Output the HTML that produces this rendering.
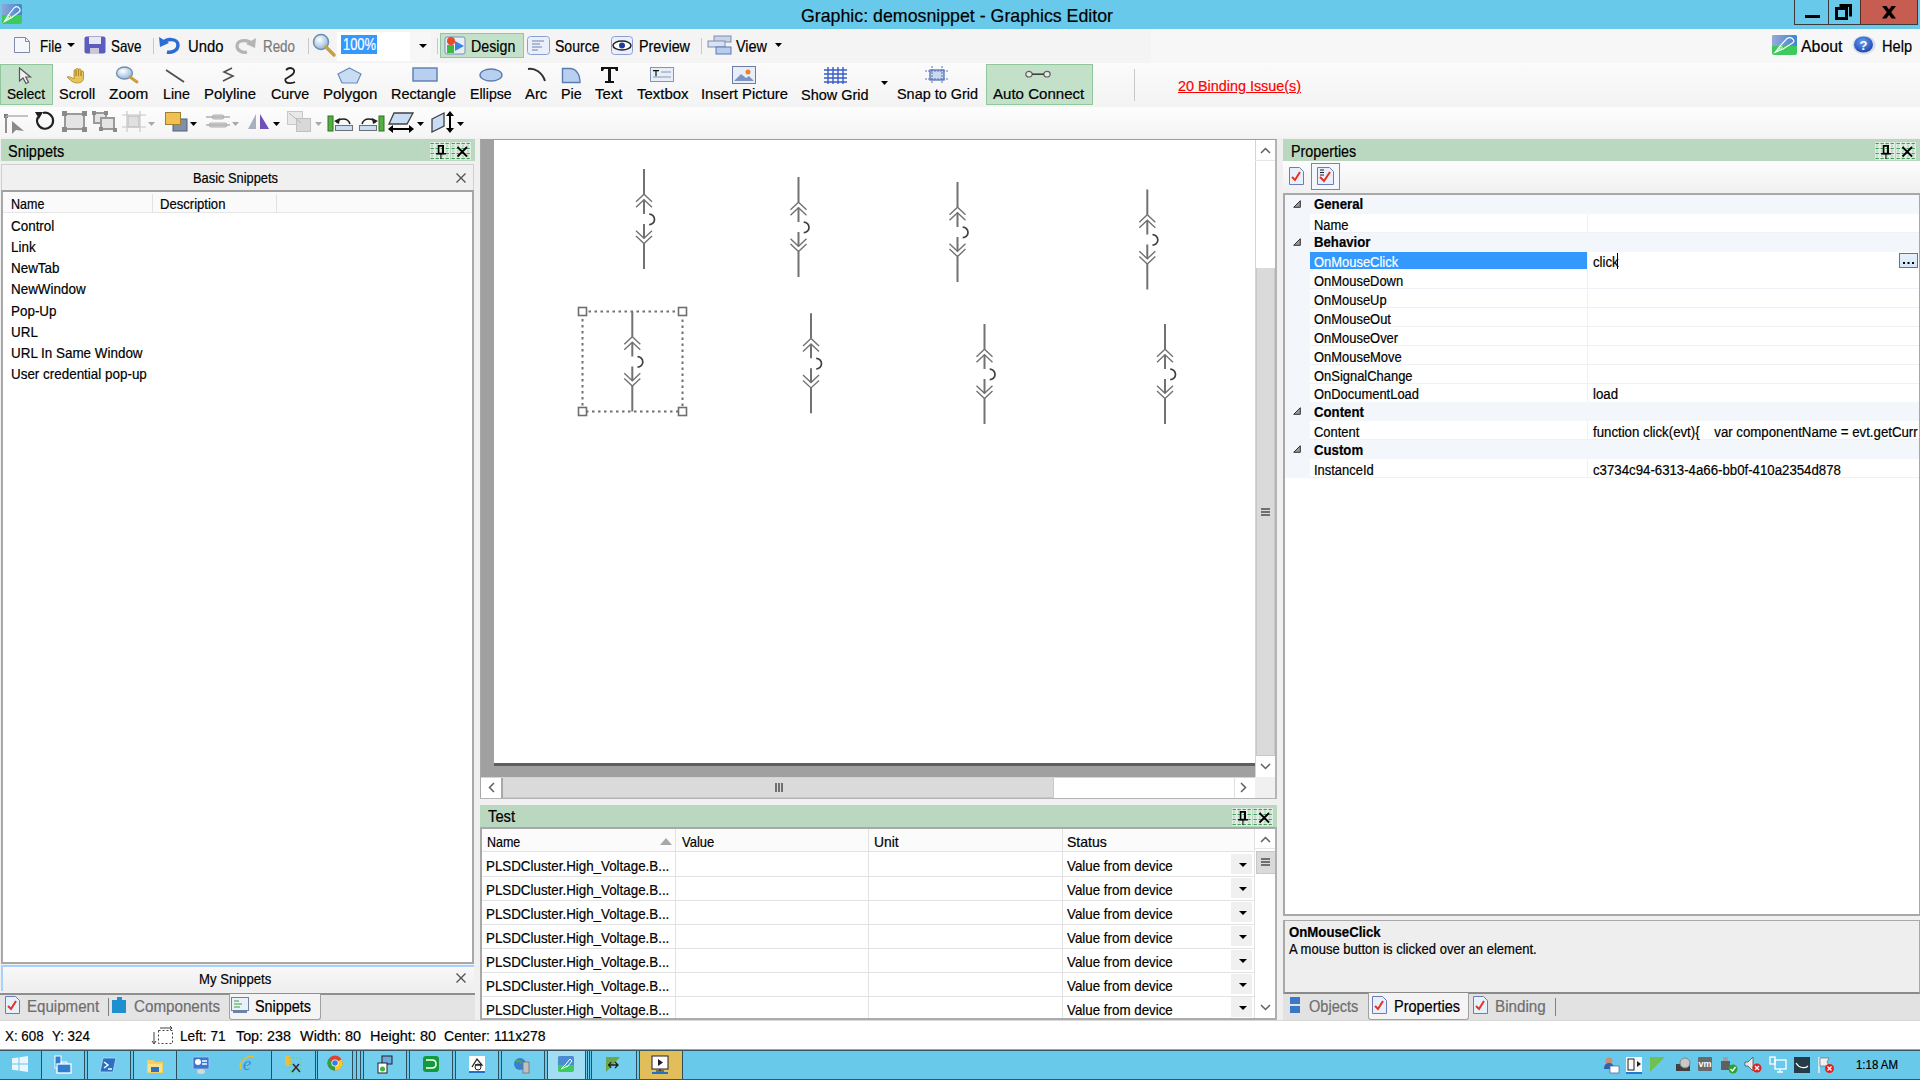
<!DOCTYPE html>
<html><head><meta charset="utf-8"><style>
html,body{margin:0;padding:0;width:1920px;height:1080px;overflow:hidden;background:#F0F0F0;font-family:"Liberation Sans", sans-serif;}
.a{position:absolute;box-sizing:border-box;}
.t{position:absolute;white-space:nowrap;font-family:"Liberation Sans", sans-serif;-webkit-text-stroke:0.2px currentColor;}
svg.a{overflow:visible}
</style></head><body>
<div class="a" style="left:0px;top:0px;width:1920px;height:29px;background:#69C9EA"></div><svg class="a" style="left:2px;top:4px;" width="20" height="20" viewBox="0 0 20 20"><defs><linearGradient id="aig" x1="0" y1="0" x2="1" y2="0"><stop offset="0" stop-color="#8FA8D8"/><stop offset="1" stop-color="#3F86D0"/></linearGradient></defs><rect x="0" y="0" width="20" height="20" rx="2" fill="#3CCB5A"/><path d="M2 0h16a2 2 0 0 1 2 2v9H0V2a2 2 0 0 1 2-2z" fill="url(#aig)"/><path d="M2.5 17.5 L6 11.5 L12.5 3.5 Q14.5 1.8 16.5 3.3 L17.8 4.8 Q18.8 6.5 17 8 L9 14 Z" fill="none" stroke="#fff" stroke-width="1.1"/><path d="M2.5 17.5L7 13" stroke="#fff" stroke-width="0.9"/><circle cx="7.2" cy="12.8" r="1.3" fill="none" stroke="#fff" stroke-width="0.8"/></svg><div class="t" style="left:801.00px;top:7.14px;font-size:18.5px;line-height:18.5px;color:#000;transform:scaleX(0.9602);transform-origin:0 0;">Graphic: demosnippet - Graphics Editor</div><div class="a" style="left:1860px;top:0px;width:58px;height:25px;background:#C75C50"></div><div class="a" style="left:1794px;top:0px;width:1px;height:25px;background:#3A3A3A"></div><div class="a" style="left:1828px;top:0px;width:1px;height:25px;background:#3A3A3A"></div><div class="a" style="left:1917px;top:0px;width:1px;height:25px;background:#5A2A25"></div><div class="a" style="left:1794px;top:24px;width:124px;height:1px;background:#3A3A3A"></div><div class="a" style="left:1805px;top:15px;width:15px;height:3px;background:#000"></div><svg class="a" style="left:1835px;top:4px;" width="17" height="16" viewBox="0 0 17 16"><path d="M4.5 1.5h11v11" fill="none" stroke="#000" stroke-width="3"/><rect x="1.5" y="4.5" width="10" height="10" fill="none" stroke="#000" stroke-width="3"/></svg><svg class="a" style="left:1881.7px;top:6px;" width="14" height="12.5" viewBox="0 0 14 12.5"><path d="M0 0H4.4L7 3.5L9.6 0H14L9.2 6.25L14 12.5H9.6L7 9L4.4 12.5H0L4.8 6.25Z" fill="#000"/></svg><div class="a" style="left:1860px;top:0px;width:1px;height:25px;background:#5A2A25"></div><div class="a" style="left:0px;top:29px;width:1920px;height:34px;background:#F4F4F4"></div><div class="a" style="left:1151px;top:29px;width:769px;height:34px;background:#F7F7F7"></div><svg class="a" style="left:13px;top:36px;" width="19" height="18" viewBox="0 0 19 18"><path d="M1.5 1.5h11l4 4v11h-15z" fill="#F4F8FC" stroke="#7F8AA8" stroke-width="1"/><path d="M12.5 1.5v4h4" fill="none" stroke="#7F8AA8"/></svg><div class="t" style="left:39.70px;top:38.03px;font-size:16.5px;line-height:16.5px;color:#000;transform:scaleX(0.8126);transform-origin:0 0;">File</div><svg class="a" style="left:67px;top:43px;" width="8" height="5" viewBox="0 0 8 5"><path d="M0 0h8L4 4z" fill="#000"/></svg><svg class="a" style="left:84px;top:36px;" width="22" height="18" viewBox="0 0 22 18"><rect x="0.5" y="0.5" width="21" height="17" rx="2" fill="#5A5DBE"/><rect x="5" y="1" width="12" height="7" fill="#E8E8F0"/><rect x="6" y="12" width="9" height="6" fill="#C8C8D8"/></svg><div class="t" style="left:111.00px;top:38.03px;font-size:16.5px;line-height:16.5px;color:#000;transform:scaleX(0.8111);transform-origin:0 0;">Save</div><div class="a" style="left:153px;top:38px;width:1px;height:16px;background:#C8C8C8"></div><svg class="a" style="left:158px;top:35px;" width="24" height="20" viewBox="0 0 24 20"><path d="M4 9 C8 3,20 3,20 10 C20 16,13 18,9 17" fill="none" stroke="#2C6BD6" stroke-width="3.5"/><path d="M1 2 L2 12 L11 8 Z" fill="#2C6BD6"/></svg><div class="t" style="left:187.50px;top:38.03px;font-size:16.5px;line-height:16.5px;color:#000;transform:scaleX(0.8998);transform-origin:0 0;">Undo</div><svg class="a" style="left:234px;top:36px;" width="23" height="18" viewBox="0 0 23 18"><path d="M19 9 C15 3,3 3,3 10 C3 15,9 17,13 16" fill="none" stroke="#B4B4B4" stroke-width="3.2"/><path d="M22 2 L21 12 L12 8 Z" fill="#B4B4B4"/></svg><div class="t" style="left:263.00px;top:38.03px;font-size:16.5px;line-height:16.5px;color:#7A7A7A;transform:scaleX(0.8111);transform-origin:0 0;">Redo</div><div class="a" style="left:308px;top:38px;width:1px;height:16px;background:#C8C8C8"></div><svg class="a" style="left:311px;top:33px;" width="25" height="24" viewBox="0 0 25 24"><defs><radialGradient id="mg" cx="0.4" cy="0.35" r="0.7"><stop offset="0" stop-color="#FFFFFF"/><stop offset="1" stop-color="#8DB3D8"/></radialGradient></defs><circle cx="10" cy="9" r="7.5" fill="url(#mg)" stroke="#6C8FB0" stroke-width="1.5"/><path d="M15 14 L23 22" stroke="#C8A040" stroke-width="3.5" stroke-linecap="round"/></svg><div class="a" style="left:337px;top:32px;width:94px;height:29px;background:#FFFFFF"></div><div class="a" style="left:410px;top:32px;width:21px;height:29px;background:#F7F7F7"></div><div class="a" style="left:341px;top:35px;width:36px;height:19px;background:#3399FF"></div><div class="t" style="left:342.50px;top:37.46px;font-size:16px;line-height:16px;color:#FFFFFF;transform:scaleX(0.8063);transform-origin:0 0;">100%</div><svg class="a" style="left:419px;top:44px;" width="8" height="5" viewBox="0 0 8 5"><path d="M0 0h8L4 4z" fill="#000"/></svg><div class="a" style="left:437px;top:38px;width:1px;height:16px;background:#C8C8C8"></div><div class="a" style="left:440px;top:33px;width:84px;height:25px;background:#C3E0C9;border:1px solid #92C79E"></div><svg class="a" style="left:444px;top:35px;" width="22" height="20" viewBox="0 0 22 20"><rect x="1" y="2" width="20" height="17" rx="2" fill="#E8EEF8" stroke="#7A8EBF"/><circle cx="7" cy="6" r="4" fill="#E84A2A"/><rect x="3" y="10" width="7" height="8" fill="#3EB83E"/><path d="M11 6 L20 11 L11 16z" fill="#3A82E0"/></svg><div class="t" style="left:471.40px;top:38.03px;font-size:16.5px;line-height:16.5px;color:#000;transform:scaleX(0.8625);transform-origin:0 0;">Design</div><svg class="a" style="left:527px;top:36px;" width="23" height="19" viewBox="0 0 23 19"><rect x="0.5" y="0.5" width="22" height="18" rx="3" fill="#E9F0FB" stroke="#8BA0D0"/><path d="M5 5h12M5 8h8M5 11h10M5 14h6" stroke="#7080A8" stroke-width="1"/></svg><div class="t" style="left:555.00px;top:38.03px;font-size:16.5px;line-height:16.5px;color:#000;transform:scaleX(0.8513);transform-origin:0 0;">Source</div><svg class="a" style="left:611px;top:36px;" width="22" height="19" viewBox="0 0 22 19"><rect x="0.5" y="0.5" width="21" height="18" rx="3" fill="#E9F0FB" stroke="#8BA0D0"/><ellipse cx="11" cy="9.5" rx="9" ry="4.5" fill="#fff" stroke="#222" stroke-width="1.5"/><circle cx="11" cy="9.5" r="3" fill="#1E3C9C"/></svg><div class="t" style="left:639.00px;top:38.03px;font-size:16.5px;line-height:16.5px;color:#000;transform:scaleX(0.8682);transform-origin:0 0;">Preview</div><div class="a" style="left:701px;top:38px;width:1px;height:16px;background:#C8C8C8"></div><svg class="a" style="left:707px;top:35px;" width="25" height="20" viewBox="0 0 25 20"><rect x="7" y="1" width="17" height="6" fill="#C8D4E8" stroke="#7C8CB0"/><rect x="1" y="6" width="17" height="6" fill="#D8E2F0" stroke="#7C8CB0"/><rect x="9" y="12" width="15" height="7" fill="#B8CCEC" stroke="#5A78B8"/></svg><div class="t" style="left:736.00px;top:38.03px;font-size:16.5px;line-height:16.5px;color:#000;transform:scaleX(0.8730);transform-origin:0 0;">View</div><svg class="a" style="left:775px;top:43px;" width="7" height="5" viewBox="0 0 7 5"><path d="M0 0h7L3.5 4z" fill="#000"/></svg><svg class="a" style="left:1772px;top:35px;" width="25" height="20" viewBox="0 0 25 20"><defs><linearGradient id="abg" x1="0" y1="0" x2="1" y2="0"><stop offset="0" stop-color="#98A8D8"/><stop offset="1" stop-color="#3F86D0"/></linearGradient></defs><rect x="0" y="0" width="25" height="20" rx="2" fill="#3CCB5A"/><path d="M2 0h21a2 2 0 0 1 2 2v9H0V2a2 2 0 0 1 2-2z" fill="url(#abg)"/><path d="M3 17.5 L7.5 11.5 L15 3.5 Q17.5 1.8 20 3.3 L21.5 4.8 Q22.8 6.5 20.5 8 L11 14 Z" fill="none" stroke="#fff" stroke-width="1.1"/><path d="M3 17.5L8.5 13" stroke="#fff" stroke-width="0.9"/><circle cx="8.7" cy="12.8" r="1.4" fill="none" stroke="#fff" stroke-width="0.8"/></svg><div class="t" style="left:1801.00px;top:37.73px;font-size:16.5px;line-height:16.5px;color:#000;transform:scaleX(0.9626);transform-origin:0 0;">About</div><svg class="a" style="left:1852px;top:35px;" width="25" height="20" viewBox="0 0 25 20"><defs><radialGradient id="hg" cx="0.45" cy="0.35" r="0.7"><stop offset="0" stop-color="#6AA0F0"/><stop offset="1" stop-color="#1840B0"/></radialGradient></defs><ellipse cx="12" cy="10" rx="11.5" ry="9.5" fill="#D8DDE8"/><ellipse cx="11.5" cy="9.5" rx="9.5" ry="8" fill="url(#hg)"/><text x="11.5" y="15" font-size="13" font-weight="bold" text-anchor="middle" fill="#fff" font-family="Liberation Sans">?</text></svg><div class="t" style="left:1881.70px;top:37.73px;font-size:16.5px;line-height:16.5px;color:#000;transform:scaleX(0.8839);transform-origin:0 0;">Help</div><div class="a" style="left:0px;top:63px;width:1920px;height:44px;background:linear-gradient(#FBFBFB,#F3F3F3)"></div><div class="a" style="left:0px;top:64px;width:53px;height:41px;background:#C3E0C9;border:1px solid #92C79E"></div><div class="a" style="left:986px;top:64px;width:107px;height:41px;background:#C3E0C9;border:1px solid #92C79E"></div><div class="t" style="left:7.00px;top:85.88px;font-size:15.5px;line-height:15.5px;color:#000;transform:scaleX(0.8822);transform-origin:0 0;">Select</div><div class="t" style="left:58.75px;top:85.88px;font-size:15.5px;line-height:15.5px;color:#000;transform:scaleX(0.9351);transform-origin:0 0;">Scroll</div><div class="t" style="left:108.75px;top:85.88px;font-size:15.5px;line-height:15.5px;color:#000;transform:scaleX(0.9907);transform-origin:0 0;">Zoom</div><div class="t" style="left:163.00px;top:85.88px;font-size:15.5px;line-height:15.5px;color:#000;transform:scaleX(0.9212);transform-origin:0 0;">Line</div><div class="t" style="left:204.00px;top:85.88px;font-size:15.5px;line-height:15.5px;color:#000;transform:scaleX(0.9580);transform-origin:0 0;">Polyline</div><div class="t" style="left:270.50px;top:85.88px;font-size:15.5px;line-height:15.5px;color:#000;transform:scaleX(0.9249);transform-origin:0 0;">Curve</div><div class="t" style="left:322.50px;top:85.88px;font-size:15.5px;line-height:15.5px;color:#000;transform:scaleX(0.9685);transform-origin:0 0;">Polygon</div><div class="t" style="left:391.00px;top:85.88px;font-size:15.5px;line-height:15.5px;color:#000;transform:scaleX(0.9313);transform-origin:0 0;">Rectangle</div><div class="t" style="left:470.00px;top:85.88px;font-size:15.5px;line-height:15.5px;color:#000;transform:scaleX(0.9132);transform-origin:0 0;">Ellipse</div><div class="t" style="left:525.00px;top:85.88px;font-size:15.5px;line-height:15.5px;color:#000;transform:scaleX(0.9591);transform-origin:0 0;">Arc</div><div class="t" style="left:561.00px;top:85.88px;font-size:15.5px;line-height:15.5px;color:#000;transform:scaleX(0.9242);transform-origin:0 0;">Pie</div><div class="t" style="left:595.00px;top:85.88px;font-size:15.5px;line-height:15.5px;color:#000;transform:scaleX(0.9604);transform-origin:0 0;">Text</div><div class="t" style="left:636.70px;top:85.88px;font-size:15.5px;line-height:15.5px;color:#000;transform:scaleX(0.9661);transform-origin:0 0;">Textbox</div><div class="t" style="left:700.70px;top:85.88px;font-size:15.5px;line-height:15.5px;color:#000;transform:scaleX(0.9528);transform-origin:0 0;">Insert Picture</div><div class="t" style="left:800.70px;top:86.68px;font-size:15.5px;line-height:15.5px;color:#000;transform:scaleX(0.9343);transform-origin:0 0;">Show Grid</div><div class="t" style="left:897.30px;top:85.88px;font-size:15.5px;line-height:15.5px;color:#000;transform:scaleX(0.9309);transform-origin:0 0;">Snap to Grid</div><div class="t" style="left:992.70px;top:85.88px;font-size:15.5px;line-height:15.5px;color:#000;transform:scaleX(0.9720);transform-origin:0 0;">Auto Connect</div><svg class="a" style="left:18px;top:67px;" width="16" height="17" viewBox="0 0 16 17"><path d="M1.5 1 L1.5 14 L5 11 L8 16.5 L10.5 15.3 L7.8 10 L12.5 10 Z" fill="#F0F0F0" stroke="#555" stroke-width="1.2"/></svg><svg class="a" style="left:66px;top:68px;" width="22" height="15" viewBox="0 0 22 15"><path d="M1 9 C4 8,6 10,8 11 L8 3 C8 1,10 1,10 3 L10 8 L10 1.5 C10 0,12.5 0,12.5 1.5 L12.5 8 L12.5 2 C12.5 0.5,15 0.5,15 2 L15 8 L15 4 C15 2.5,17.5 2.5,17.5 4 L17.5 10 C17.5 14,14 15,11 15 C7 15,4 12,1 9Z" fill="#E6C45A" stroke="#A8872A" stroke-width="0.8"/></svg><svg class="a" style="left:115px;top:66px;" width="25" height="18" viewBox="0 0 25 18"><defs><radialGradient id="mg2" cx="0.4" cy="0.35" r="0.7"><stop offset="0" stop-color="#FFFFFF"/><stop offset="1" stop-color="#8DB3D8"/></radialGradient></defs><ellipse cx="9.5" cy="7" rx="8" ry="6" fill="url(#mg2)" stroke="#6C8FB0" stroke-width="1.3"/><path d="M15 11 L22 16" stroke="#C8A040" stroke-width="3" stroke-linecap="round"/></svg><svg class="a" style="left:165px;top:69px;" width="21" height="15" viewBox="0 0 21 15"><path d="M1 1 L19 13" stroke="#505050" stroke-width="1.8"/></svg><svg class="a" style="left:220px;top:67px;" width="17" height="17" viewBox="0 0 17 17"><path d="M12 1 L4 5 L13 9 L3 14" fill="none" stroke="#505050" stroke-width="1.6"/></svg><svg class="a" style="left:280px;top:67px;" width="20" height="18" viewBox="0 0 20 18"><path d="M6 3 C10 -1,17 2,13 7 C9 11,3 11,6 15 C8 17,13 16,15 15" fill="none" stroke="#202020" stroke-width="1.8"/></svg><svg class="a" style="left:337px;top:67px;" width="25" height="17" viewBox="0 0 25 17"><path d="M12.5 1 L24 7 L20 16 L5 16 L1 7 Z" fill="#C8DCF4" stroke="#6C8CB8" stroke-width="1.2"/></svg><svg class="a" style="left:412px;top:67px;" width="26" height="16" viewBox="0 0 26 16"><rect x="1" y="1" width="24" height="13" fill="#B8D0F0" stroke="#5C7CB0" stroke-width="1.4"/></svg><svg class="a" style="left:479px;top:68px;" width="24" height="14" viewBox="0 0 24 14"><ellipse cx="12" cy="7" rx="11" ry="6" fill="#B8D0F0" stroke="#5C7CB0" stroke-width="1.4"/></svg><svg class="a" style="left:527px;top:67px;" width="20" height="16" viewBox="0 0 20 16"><path d="M1 2 C8 1,15 5,18 14" fill="none" stroke="#303030" stroke-width="2"/></svg><svg class="a" style="left:561px;top:67px;" width="21" height="17" viewBox="0 0 21 17"><path d="M1.5 1.5 L9 1.5 C14 1.5,19 6,19 15.5 L1.5 15.5 Z" fill="#B8D0F0" stroke="#5C7CB0" stroke-width="1.4"/></svg><svg class="a" style="left:600px;top:66px;" width="19" height="17" viewBox="0 0 19 17"><path d="M1 1h17v4h-2l-1-2h-4v12h3v2H5v-2h3V3H4L3 5H1z" fill="#111"/></svg><svg class="a" style="left:650px;top:67px;" width="24" height="15" viewBox="0 0 24 15"><rect x="0.5" y="0.5" width="23" height="14" fill="#E8EEF8" stroke="#8A96B0"/><path d="M3 3h6v1.2H6.6v5H5.4v-5H3z" fill="#111"/><path d="M11 5h10M3 10h18" stroke="#8A96B0" stroke-width="1.2"/></svg><svg class="a" style="left:732px;top:66px;" width="24" height="18" viewBox="0 0 24 18"><rect x="0.5" y="0.5" width="23" height="17" fill="#E8EEF8" stroke="#6C7CA8"/><circle cx="16" cy="6" r="2.5" fill="#F08030"/><path d="M2 15 L9 8 L14 12 L17 10 L22 15 Z" fill="#7A94C8"/></svg><svg class="a" style="left:824px;top:67px;" width="23" height="17" viewBox="0 0 23 17"><path d="M4 0v17M9 0v17M14 0v17M19 0v17M0 3h23M0 7h23M0 11h23M0 15h23" stroke="#3A5CC8" stroke-width="1.4"/></svg><svg class="a" style="left:881px;top:81px;" width="7" height="5" viewBox="0 0 7 5"><path d="M0 0h7L3.5 4z" fill="#000"/></svg><svg class="a" style="left:925px;top:66px;" width="24" height="18" viewBox="0 0 24 18"><rect x="5" y="4" width="14" height="10" fill="#C8D8F0" stroke="#5874B8" stroke-width="1.3"/><path d="M0 5h24M0 13h24M7 0v18M17 0v18" stroke="#5874B8" stroke-width="1" stroke-dasharray="2 1"/></svg><svg class="a" style="left:1025px;top:70px;" width="27" height="9" viewBox="0 0 27 9"><ellipse cx="4" cy="4.2" rx="3.2" ry="2.8" fill="#E8E8E8" stroke="#606060" stroke-width="1.2"/><ellipse cx="22" cy="4.2" rx="3.2" ry="2.8" fill="#E8E8E8" stroke="#606060" stroke-width="1.2"/><path d="M7 4.2h12" stroke="#404040" stroke-width="1.6"/></svg><div class="a" style="left:1134px;top:69px;width:1px;height:32px;background:#C8C8C8"></div><div class="t" style="left:1178.00px;top:77.88px;font-size:15.5px;line-height:15.5px;color:#FF0000;transform:scaleX(0.9270);transform-origin:0 0;text-decoration:underline">20 Binding Issue(s)</div><div class="a" style="left:0px;top:107px;width:1920px;height:32px;background:linear-gradient(#FDFDFD,#F4F4F4)"></div><svg class="a" style="left:3px;top:113px;" width="25" height="21" viewBox="0 0 25 21"><rect x="1" y="1" width="4" height="4" fill="#7A7A7A"/><path d="M3 3v17" stroke="#909090" stroke-width="2"/><path d="M3 3h22" stroke="#B0B0B0" stroke-width="1.5"/><path d="M9 8 L21 18 L13 17 L9 21 Z" fill="#8A8A8A"/></svg><svg class="a" style="left:33px;top:111px;" width="22" height="19" viewBox="0 0 22 19"><path d="M5 6 A8 8 0 1 0 10 2" fill="none" stroke="#202020" stroke-width="2.2"/><path d="M2 1 L10 1 L6 8 Z" fill="#202020"/></svg><svg class="a" style="left:62px;top:111px;" width="25" height="21" viewBox="0 0 25 21"><rect x="3" y="3" width="19" height="15" fill="#E4E4E4" stroke="#9A9A9A" stroke-width="2"/><rect x="0" y="0" width="5" height="5" fill="#8A8A8A"/><rect x="20" y="0" width="5" height="5" fill="#8A8A8A"/><rect x="0" y="16" width="5" height="5" fill="#8A8A8A"/><rect x="20" y="16" width="5" height="5" fill="#8A8A8A"/></svg><svg class="a" style="left:92px;top:111px;" width="25" height="21" viewBox="0 0 25 21"><rect x="2" y="2" width="12" height="10" fill="#E4E4E4" stroke="#9A9A9A" stroke-width="2"/><rect x="9" y="7" width="13" height="11" fill="#E4E4E4" stroke="#9A9A9A" stroke-width="2"/><rect x="0" y="0" width="4" height="4" fill="#8A8A8A"/><rect x="21" y="17" width="4" height="4" fill="#8A8A8A"/><rect x="12" y="0" width="4" height="4" fill="#8A8A8A"/><rect x="7" y="16" width="4" height="4" fill="#8A8A8A"/></svg><svg class="a" style="left:122px;top:111px;" width="24" height="21" viewBox="0 0 24 21"><rect x="6" y="5" width="11" height="11" fill="#E0E0E0" stroke="#B8B8B8"/><path d="M5 0v21M18 0v21M0 4h24M0 16h24" stroke="#C8C8C8" stroke-width="1.2"/></svg><svg class="a" style="left:148px;top:122px;" width="8" height="5" viewBox="0 0 8 5"><path d="M0 0h7L3.5 4z" fill="#A8A8A8"/></svg><svg class="a" style="left:165px;top:112px;" width="23" height="19" viewBox="0 0 23 19"><rect x="8" y="7" width="14" height="12" fill="#8090A8" stroke="#506080"/><rect x="0.5" y="0.5" width="15" height="12" fill="#F0C050" stroke="#A08030"/></svg><svg class="a" style="left:190px;top:122px;" width="8" height="5" viewBox="0 0 8 5"><path d="M0 0h7L3.5 4z" fill="#000"/></svg><svg class="a" style="left:206px;top:115px;" width="23" height="13" viewBox="0 0 23 13"><rect x="6" y="0" width="12" height="4" rx="2" fill="#D8D8D8" stroke="#B0B0B0"/><rect x="3" y="8" width="18" height="4" rx="2" fill="#D8D8D8" stroke="#B0B0B0"/><path d="M0 2h24M0 10h24" stroke="#B0B0B0" stroke-width="1.3"/></svg><svg class="a" style="left:232px;top:122px;" width="8" height="5" viewBox="0 0 8 5"><path d="M0 0h7L3.5 4z" fill="#A8A8A8"/></svg><svg class="a" style="left:247px;top:113px;" width="23" height="17" viewBox="0 0 23 17"><path d="M9 1 L9 16 L1 16 Z" fill="#A8B0C0"/><path d="M13 1 L13 16 L22 16 Z" fill="#7050B8"/></svg><svg class="a" style="left:273px;top:122px;" width="8" height="5" viewBox="0 0 8 5"><path d="M0 0h7L3.5 4z" fill="#000"/></svg><svg class="a" style="left:287px;top:111px;" width="25" height="21" viewBox="0 0 25 21"><rect x="0.5" y="0.5" width="15" height="13" fill="#E8E8E8" stroke="#C8C8C8"/><rect x="9.5" y="7.5" width="14" height="13" fill="#D8D8D8" stroke="#C0C0C0"/><path d="M2 2 L14 12" stroke="#B8B8B8"/></svg><svg class="a" style="left:315px;top:122px;" width="8" height="5" viewBox="0 0 8 5"><path d="M0 0h7L3.5 4z" fill="#A8A8A8"/></svg><svg class="a" style="left:328px;top:116px;" width="26" height="15" viewBox="0 0 26 15"><rect x="0" y="0" width="5" height="15" fill="#50B040" stroke="#307020"/><rect x="7.5" y="9.5" width="17" height="5" fill="#C8DCF4" stroke="#707070"/><path d="M9 7 C10 2,20 1,22 8" fill="none" stroke="#202020" stroke-width="1.6"/><path d="M6 5 L12 2 L11 8z" fill="#202020"/></svg><svg class="a" style="left:358px;top:116px;" width="26" height="15" viewBox="0 0 26 15"><rect x="21" y="0" width="5" height="15" fill="#50B040" stroke="#307020"/><rect x="1.5" y="9.5" width="17" height="5" fill="#C8DCF4" stroke="#707070"/><path d="M17 7 C16 2,6 1,4 8" fill="none" stroke="#202020" stroke-width="1.6"/><path d="M20 5 L14 2 L15 8z" fill="#202020"/></svg><svg class="a" style="left:388px;top:112px;" width="26" height="21" viewBox="0 0 26 21"><path d="M6 1h19l-6 11H1z" fill="#C8DCF4" stroke="#404040" stroke-width="1.3"/><path d="M2 17h22" stroke="#000" stroke-width="2"/><path d="M0 17 L5 13 L5 21Z M26 17 L21 13 L21 21Z" fill="#000"/></svg><svg class="a" style="left:417px;top:122px;" width="8" height="5" viewBox="0 0 8 5"><path d="M0 0h7L3.5 4z" fill="#000"/></svg><svg class="a" style="left:431px;top:111px;" width="26" height="22" viewBox="0 0 26 22"><path d="M1 8 L13 2 L13 15 L1 21Z" fill="#C8DCF4" stroke="#404040" stroke-width="1.3"/><path d="M19 2v18" stroke="#000" stroke-width="2"/><path d="M19 0 L15 5 L23 5Z M19 22 L15 17 L23 17Z" fill="#000"/></svg><svg class="a" style="left:457px;top:122px;" width="8" height="5" viewBox="0 0 8 5"><path d="M0 0h7L3.5 4z" fill="#000"/></svg><div class="a" style="left:0px;top:138px;width:1920px;height:884px;background:#F0F0F0"></div><div class="a" style="left:1px;top:139px;width:474px;height:22px;background:#BAD7BF"></div><div class="t" style="left:7.50px;top:143.09px;font-size:16.2px;line-height:16.2px;color:#000;transform:scaleX(0.8921);transform-origin:0 0;">Snippets</div><svg class="a" style="left:430px;top:142px;" width="20" height="18" viewBox="0 0 20 18"><rect x="0" y="0" width="20" height="18" fill="#EDF3EE" fill-opacity="0.75"/><path d="M0.5 1.5H20" stroke="#1E9040" stroke-width="1" stroke-dasharray="1 1.5" stroke-opacity="0.75"/><path d="M0.5 6.5H20" stroke="#1E9040" stroke-width="1" stroke-dasharray="1 1.5" stroke-opacity="0.75"/><path d="M0.5 11.5H20" stroke="#1E9040" stroke-width="1" stroke-dasharray="1 1.5" stroke-opacity="0.75"/><path d="M0.5 16.5H20" stroke="#1E9040" stroke-width="1" stroke-dasharray="1 1.5" stroke-opacity="0.75"/><path d="M2 1V17" stroke="#1E9040" stroke-width="1" stroke-dasharray="1 1.5" stroke-opacity="0.7"/><path d="M7 1V17" stroke="#1E9040" stroke-width="1" stroke-dasharray="1 1.5" stroke-opacity="0.7"/><path d="M12 1V17" stroke="#1E9040" stroke-width="1" stroke-dasharray="1 1.5" stroke-opacity="0.7"/><path d="M17 1V17" stroke="#1E9040" stroke-width="1" stroke-dasharray="1 1.5" stroke-opacity="0.7"/><rect x="1.4" y="0.9" width="1.2" height="1.2" fill="#148A38"/><rect x="6.4" y="0.9" width="1.2" height="1.2" fill="#148A38"/><rect x="11.4" y="0.9" width="1.2" height="1.2" fill="#148A38"/><rect x="16.4" y="0.9" width="1.2" height="1.2" fill="#148A38"/><rect x="1.4" y="5.9" width="1.2" height="1.2" fill="#148A38"/><rect x="6.4" y="5.9" width="1.2" height="1.2" fill="#148A38"/><rect x="11.4" y="5.9" width="1.2" height="1.2" fill="#148A38"/><rect x="16.4" y="5.9" width="1.2" height="1.2" fill="#148A38"/><rect x="1.4" y="10.9" width="1.2" height="1.2" fill="#148A38"/><rect x="6.4" y="10.9" width="1.2" height="1.2" fill="#148A38"/><rect x="11.4" y="10.9" width="1.2" height="1.2" fill="#148A38"/><rect x="16.4" y="10.9" width="1.2" height="1.2" fill="#148A38"/><rect x="1.4" y="15.9" width="1.2" height="1.2" fill="#148A38"/><rect x="6.4" y="15.9" width="1.2" height="1.2" fill="#148A38"/><rect x="11.4" y="15.9" width="1.2" height="1.2" fill="#148A38"/><rect x="16.4" y="15.9" width="1.2" height="1.2" fill="#148A38"/><path d="M8.6 3.9h4.6v7.6h-4.6z" fill="none" stroke="#000" stroke-width="1.6"/><path d="M12.6 4v7.4" stroke="#000" stroke-width="1.2"/><path d="M6 11.8h10" stroke="#000" stroke-width="1.4"/><path d="M10.9 12v5" stroke="#000" stroke-width="1"/></svg><svg class="a" style="left:451px;top:142px;" width="20" height="18" viewBox="0 0 20 18"><rect x="0" y="0" width="20" height="18" fill="#EDF3EE" fill-opacity="0.75"/><path d="M0.5 1.5H20" stroke="#1E9040" stroke-width="1" stroke-dasharray="1 1.5" stroke-opacity="0.75"/><path d="M0.5 6.5H20" stroke="#1E9040" stroke-width="1" stroke-dasharray="1 1.5" stroke-opacity="0.75"/><path d="M0.5 11.5H20" stroke="#1E9040" stroke-width="1" stroke-dasharray="1 1.5" stroke-opacity="0.75"/><path d="M0.5 16.5H20" stroke="#1E9040" stroke-width="1" stroke-dasharray="1 1.5" stroke-opacity="0.75"/><path d="M2 1V17" stroke="#1E9040" stroke-width="1" stroke-dasharray="1 1.5" stroke-opacity="0.7"/><path d="M7 1V17" stroke="#1E9040" stroke-width="1" stroke-dasharray="1 1.5" stroke-opacity="0.7"/><path d="M12 1V17" stroke="#1E9040" stroke-width="1" stroke-dasharray="1 1.5" stroke-opacity="0.7"/><path d="M17 1V17" stroke="#1E9040" stroke-width="1" stroke-dasharray="1 1.5" stroke-opacity="0.7"/><rect x="1.4" y="0.9" width="1.2" height="1.2" fill="#148A38"/><rect x="6.4" y="0.9" width="1.2" height="1.2" fill="#148A38"/><rect x="11.4" y="0.9" width="1.2" height="1.2" fill="#148A38"/><rect x="16.4" y="0.9" width="1.2" height="1.2" fill="#148A38"/><rect x="1.4" y="5.9" width="1.2" height="1.2" fill="#148A38"/><rect x="6.4" y="5.9" width="1.2" height="1.2" fill="#148A38"/><rect x="11.4" y="5.9" width="1.2" height="1.2" fill="#148A38"/><rect x="16.4" y="5.9" width="1.2" height="1.2" fill="#148A38"/><rect x="1.4" y="10.9" width="1.2" height="1.2" fill="#148A38"/><rect x="6.4" y="10.9" width="1.2" height="1.2" fill="#148A38"/><rect x="11.4" y="10.9" width="1.2" height="1.2" fill="#148A38"/><rect x="16.4" y="10.9" width="1.2" height="1.2" fill="#148A38"/><rect x="1.4" y="15.9" width="1.2" height="1.2" fill="#148A38"/><rect x="6.4" y="15.9" width="1.2" height="1.2" fill="#148A38"/><rect x="11.4" y="15.9" width="1.2" height="1.2" fill="#148A38"/><rect x="16.4" y="15.9" width="1.2" height="1.2" fill="#148A38"/><path d="M6.5 5L16 14.5M16 5L6.5 14.5" stroke="#000" stroke-width="1.8"/></svg><div class="a" style="left:1px;top:164px;width:473px;height:26px;background:#F0F0F0;border:1px solid #D0D0D0;border-bottom:none"></div><div class="t" style="left:192.50px;top:169.80px;font-size:15px;line-height:15px;color:#000;transform:scaleX(0.8566);transform-origin:0 0;">Basic Snippets</div><svg class="a" style="left:456px;top:173px;" width="10" height="10" viewBox="0 0 10 10"><path d="M0.5 0.5L9.5 9.5M9.5 0.5L0.5 9.5" stroke="#505050" stroke-width="1.3"/></svg><div class="a" style="left:1px;top:190px;width:473px;height:774px;background:#FFFFFF;border:2px solid #A8A8A8;border-top:2px solid #A0A0A0"></div><div class="a" style="left:3px;top:192px;width:469px;height:21px;background:#FAFAFA;border-bottom:1px solid #E6E6E6"></div><div class="a" style="left:152px;top:194px;width:1px;height:19px;background:#E2E2E2"></div><div class="a" style="left:276px;top:194px;width:1px;height:19px;background:#E2E2E2"></div><div class="t" style="left:10.60px;top:196.93px;font-size:14.5px;line-height:14.5px;color:#000;transform:scaleX(0.8634);transform-origin:0 0;">Name</div><div class="t" style="left:159.60px;top:196.93px;font-size:14.5px;line-height:14.5px;color:#000;transform:scaleX(0.9017);transform-origin:0 0;">Description</div><div class="t" style="left:10.60px;top:217.60px;font-size:15px;line-height:15px;color:#000;transform:scaleX(0.8950);transform-origin:0 0;">Control</div><div class="t" style="left:10.60px;top:238.85px;font-size:15px;line-height:15px;color:#000;transform:scaleX(0.8950);transform-origin:0 0;">Link</div><div class="t" style="left:10.60px;top:260.10px;font-size:15px;line-height:15px;color:#000;transform:scaleX(0.8950);transform-origin:0 0;">NewTab</div><div class="t" style="left:10.60px;top:281.35px;font-size:15px;line-height:15px;color:#000;transform:scaleX(0.8950);transform-origin:0 0;">NewWindow</div><div class="t" style="left:10.60px;top:302.60px;font-size:15px;line-height:15px;color:#000;transform:scaleX(0.8950);transform-origin:0 0;">Pop-Up</div><div class="t" style="left:10.60px;top:323.85px;font-size:15px;line-height:15px;color:#000;transform:scaleX(0.8950);transform-origin:0 0;">URL</div><div class="t" style="left:10.60px;top:345.10px;font-size:15px;line-height:15px;color:#000;transform:scaleX(0.8950);transform-origin:0 0;">URL In Same Window</div><div class="t" style="left:10.60px;top:366.35px;font-size:15px;line-height:15px;color:#000;transform:scaleX(0.8950);transform-origin:0 0;">User credential pop-up</div><div class="a" style="left:1px;top:965px;width:473px;height:26px;background:linear-gradient(#F8F8F8,#EEEEEE);border:2px solid #A8D0FF;border-bottom:none;border-right:none"></div><div class="t" style="left:199.40px;top:970.70px;font-size:15px;line-height:15px;color:#000;transform:scaleX(0.8748);transform-origin:0 0;">My Snippets</div><svg class="a" style="left:456px;top:973px;" width="10" height="10" viewBox="0 0 10 10"><path d="M0.5 0.5L9.5 9.5M9.5 0.5L0.5 9.5" stroke="#505050" stroke-width="1.3"/></svg><div class="a" style="left:0px;top:993px;width:475px;height:27px;background:#E4E4E4;border-top:2px solid #8E8E8E"></div><div class="a" style="left:229px;top:994px;width:92px;height:26px;background:#F4F4F4;border:1px solid #A0A0A0;border-top:none;border-radius:0 0 3px 3px"></div><svg class="a" style="left:5px;top:996px;" width="15" height="18" viewBox="0 0 15 18"><path d="M0.5 0.5h10l4 4v13h-14z" fill="#E8F0FC" stroke="#6C7CB8"/><path d="M3 10 L6 13 L11 5" fill="none" stroke="#E83020" stroke-width="2"/></svg><div class="t" style="left:26.60px;top:998.76px;font-size:16px;line-height:16px;color:#6E6E6E;transform:scaleX(0.9438);transform-origin:0 0;">Equipment</div><div class="a" style="left:108px;top:998px;width:1px;height:18px;background:#808080"></div><svg class="a" style="left:112px;top:997px;" width="14" height="16" viewBox="0 0 14 16"><path d="M0 3h5v-3h5v3h4v13h-14z" fill="#1E90D0"/></svg><div class="t" style="left:134.00px;top:998.76px;font-size:16px;line-height:16px;color:#6E6E6E;transform:scaleX(0.9480);transform-origin:0 0;">Components</div><svg class="a" style="left:231px;top:997px;" width="18" height="16" viewBox="0 0 18 16"><rect x="0.5" y="0.5" width="17" height="13" fill="#E8F0F8" stroke="#6C84A8"/><path d="M3 4h5M3 7h8M3 10h6" stroke="#40A040" stroke-width="1.2"/><rect x="2" y="13" width="14" height="3" fill="#6C84A8"/></svg><div class="t" style="left:255.00px;top:998.76px;font-size:16px;line-height:16px;color:#000;transform:scaleX(0.8993);transform-origin:0 0;">Snippets</div><div class="a" style="left:480px;top:139px;width:797px;height:660px;background:#A0A0A0;border:1px solid #A8A8A8;border-top:1px solid #A0A0A0;border-right:2px solid #B4B4B4;border-bottom:2px solid #B4B4B4"></div><div class="a" style="left:494px;top:140px;width:761px;height:623px;background:#FFFFFF"></div><div class="a" style="left:494px;top:763px;width:761px;height:3px;background:#5E5E5E"></div><svg class="a" style="left:0px;top:0px;pointer-events:none" width="1920" height="1080" viewBox="0 0 1920 1080"><path d="M644 169V194.2M644 199.7V214M644 224V238.3M644 243.6V269" stroke="#727272" stroke-width="2" fill="none"/><path d="M636 201.7L644 194.2L652 201.7M636 207.2L644 199.7L652 207.2M636 230.8L644 238.3L652 230.8M636 236.1L644 243.6L652 236.1" stroke="#727272" stroke-width="1.4" fill="none"/><path d="M649.2 214.1A5.3 5.3 0 0 1 649.2 224.7" stroke="#404040" stroke-width="1.7" fill="none"/><path d="M798.5 177V202.2M798.5 207.7V222M798.5 232V246.3M798.5 251.6V277" stroke="#727272" stroke-width="2" fill="none"/><path d="M790.5 209.7L798.5 202.2L806.5 209.7M790.5 215.2L798.5 207.7L806.5 215.2M790.5 238.8L798.5 246.3L806.5 238.8M790.5 244.1L798.5 251.6L806.5 244.1" stroke="#727272" stroke-width="1.4" fill="none"/><path d="M803.7 222.1A5.3 5.3 0 0 1 803.7 232.7" stroke="#404040" stroke-width="1.7" fill="none"/><path d="M957.5 182V207.2M957.5 212.7V227M957.5 237V251.3M957.5 256.6V282" stroke="#727272" stroke-width="2" fill="none"/><path d="M949.5 214.7L957.5 207.2L965.5 214.7M949.5 220.2L957.5 212.7L965.5 220.2M949.5 243.8L957.5 251.3L965.5 243.8M949.5 249.10000000000002L957.5 256.6L965.5 249.10000000000002" stroke="#727272" stroke-width="1.4" fill="none"/><path d="M962.7 227.1A5.3 5.3 0 0 1 962.7 237.7" stroke="#404040" stroke-width="1.7" fill="none"/><path d="M1147.3 189.5V214.7M1147.3 220.2V234.5M1147.3 244.5V258.8M1147.3 264.1V289.5" stroke="#727272" stroke-width="2" fill="none"/><path d="M1139.3 222.2L1147.3 214.7L1155.3 222.2M1139.3 227.7L1147.3 220.2L1155.3 227.7M1139.3 251.3L1147.3 258.8L1155.3 251.3M1139.3 256.6L1147.3 264.1L1155.3 256.6" stroke="#727272" stroke-width="1.4" fill="none"/><path d="M1152.5 234.6A5.3 5.3 0 0 1 1152.5 245.2" stroke="#404040" stroke-width="1.7" fill="none"/><path d="M632.3 311.5V336.7M632.3 342.2V356.5M632.3 366.5V380.8M632.3 386.1V411.5" stroke="#727272" stroke-width="2" fill="none"/><path d="M624.3 344.2L632.3 336.7L640.3 344.2M624.3 349.7L632.3 342.2L640.3 349.7M624.3 373.3L632.3 380.8L640.3 373.3M624.3 378.6L632.3 386.1L640.3 378.6" stroke="#727272" stroke-width="1.4" fill="none"/><path d="M637.5 356.6A5.3 5.3 0 0 1 637.5 367.2" stroke="#404040" stroke-width="1.7" fill="none"/><path d="M811 313.3V338.5M811 344.0V358.3M811 368.3V382.6M811 387.9V413.3" stroke="#727272" stroke-width="2" fill="none"/><path d="M803 346.0L811 338.5L819 346.0M803 351.5L811 344.0L819 351.5M803 375.1L811 382.6L819 375.1M803 380.4L811 387.9L819 380.4" stroke="#727272" stroke-width="1.4" fill="none"/><path d="M816.2 358.40000000000003A5.3 5.3 0 0 1 816.2 369.0" stroke="#404040" stroke-width="1.7" fill="none"/><path d="M984.5 324V349.2M984.5 354.7V369M984.5 379V393.3M984.5 398.6V424" stroke="#727272" stroke-width="2" fill="none"/><path d="M976.5 356.7L984.5 349.2L992.5 356.7M976.5 362.2L984.5 354.7L992.5 362.2M976.5 385.8L984.5 393.3L992.5 385.8M976.5 391.1L984.5 398.6L992.5 391.1" stroke="#727272" stroke-width="1.4" fill="none"/><path d="M989.7 369.1A5.3 5.3 0 0 1 989.7 379.7" stroke="#404040" stroke-width="1.7" fill="none"/><path d="M1165 324V349.2M1165 354.7V369M1165 379V393.3M1165 398.6V424" stroke="#727272" stroke-width="2" fill="none"/><path d="M1157 356.7L1165 349.2L1173 356.7M1157 362.2L1165 354.7L1173 362.2M1157 385.8L1165 393.3L1173 385.8M1157 391.1L1165 398.6L1173 391.1" stroke="#727272" stroke-width="1.4" fill="none"/><path d="M1170.2 369.1A5.3 5.3 0 0 1 1170.2 379.7" stroke="#404040" stroke-width="1.7" fill="none"/><rect x="582.5" y="311.5" width="100" height="100" fill="none" stroke="#707070" stroke-width="2" stroke-dasharray="2.5 3.5"/><rect x="578.5" y="307.5" width="8" height="8" fill="#fff" stroke="#6E6E6E" stroke-width="1.6"/><rect x="678.5" y="307.5" width="8" height="8" fill="#fff" stroke="#6E6E6E" stroke-width="1.6"/><rect x="578.5" y="407.5" width="8" height="8" fill="#fff" stroke="#6E6E6E" stroke-width="1.6"/><rect x="678.5" y="407.5" width="8" height="8" fill="#fff" stroke="#6E6E6E" stroke-width="1.6"/></svg><div class="a" style="left:1255px;top:140px;width:20px;height:637px;background:#FFFFFF;border-left:1px solid #D4D4D4"></div><div class="a" style="left:1256px;top:268px;width:19px;height:488px;background:#DADADA;border:1px solid #C8C8C8;border-top:none"></div><div class="a" style="left:1255px;top:160px;width:20px;height:1px;background:#E6E6E6"></div><svg class="a" style="left:1260px;top:147px;" width="11" height="7" viewBox="0 0 11 7"><path d="M1 6L5.5 1.5L10 6" fill="none" stroke="#606060" stroke-width="1.5"/></svg><svg class="a" style="left:1260px;top:763px;" width="11" height="7" viewBox="0 0 11 7"><path d="M1 1L5.5 5.5L10 1" fill="none" stroke="#606060" stroke-width="1.5"/></svg><div class="a" style="left:1261px;top:508px;width:9px;height:1.5px;background:#707070"></div><div class="a" style="left:1261px;top:511px;width:9px;height:1.5px;background:#707070"></div><div class="a" style="left:1261px;top:514px;width:9px;height:1.5px;background:#707070"></div><div class="a" style="left:481px;top:777px;width:774px;height:21px;background:#FFFFFF;border-top:1px solid #D4D4D4"></div><div class="a" style="left:502px;top:778px;width:552px;height:20px;background:#DADADA;border:1px solid #C8C8C8;border-left:none;border-top:none"></div><div class="a" style="left:501px;top:778px;width:2px;height:20px;background:#A8A8A8"></div><div class="a" style="left:1234px;top:778px;width:1px;height:20px;background:#E0E0E0"></div><svg class="a" style="left:488px;top:782px;" width="7" height="11" viewBox="0 0 7 11"><path d="M6 1L1.5 5.5L6 10" fill="none" stroke="#606060" stroke-width="1.5"/></svg><svg class="a" style="left:1240px;top:782px;" width="7" height="11" viewBox="0 0 7 11"><path d="M1 1L5.5 5.5L1 10" fill="none" stroke="#606060" stroke-width="1.5"/></svg><div class="a" style="left:775px;top:783px;width:1.5px;height:9px;background:#707070"></div><div class="a" style="left:778px;top:783px;width:1.5px;height:9px;background:#707070"></div><div class="a" style="left:781px;top:783px;width:1.5px;height:9px;background:#707070"></div><div class="a" style="left:1255px;top:777px;width:20px;height:21px;background:#F0F0F0"></div><div class="a" style="left:480px;top:805px;width:797px;height:22px;background:#BAD7BF"></div><div class="t" style="left:487.80px;top:808.39px;font-size:16.2px;line-height:16.2px;color:#000;transform:scaleX(0.9121);transform-origin:0 0;">Test</div><svg class="a" style="left:1232px;top:808px;" width="20" height="18" viewBox="0 0 20 18"><rect x="0" y="0" width="20" height="18" fill="#EDF3EE" fill-opacity="0.75"/><path d="M0.5 1.5H20" stroke="#1E9040" stroke-width="1" stroke-dasharray="1 1.5" stroke-opacity="0.75"/><path d="M0.5 6.5H20" stroke="#1E9040" stroke-width="1" stroke-dasharray="1 1.5" stroke-opacity="0.75"/><path d="M0.5 11.5H20" stroke="#1E9040" stroke-width="1" stroke-dasharray="1 1.5" stroke-opacity="0.75"/><path d="M0.5 16.5H20" stroke="#1E9040" stroke-width="1" stroke-dasharray="1 1.5" stroke-opacity="0.75"/><path d="M2 1V17" stroke="#1E9040" stroke-width="1" stroke-dasharray="1 1.5" stroke-opacity="0.7"/><path d="M7 1V17" stroke="#1E9040" stroke-width="1" stroke-dasharray="1 1.5" stroke-opacity="0.7"/><path d="M12 1V17" stroke="#1E9040" stroke-width="1" stroke-dasharray="1 1.5" stroke-opacity="0.7"/><path d="M17 1V17" stroke="#1E9040" stroke-width="1" stroke-dasharray="1 1.5" stroke-opacity="0.7"/><rect x="1.4" y="0.9" width="1.2" height="1.2" fill="#148A38"/><rect x="6.4" y="0.9" width="1.2" height="1.2" fill="#148A38"/><rect x="11.4" y="0.9" width="1.2" height="1.2" fill="#148A38"/><rect x="16.4" y="0.9" width="1.2" height="1.2" fill="#148A38"/><rect x="1.4" y="5.9" width="1.2" height="1.2" fill="#148A38"/><rect x="6.4" y="5.9" width="1.2" height="1.2" fill="#148A38"/><rect x="11.4" y="5.9" width="1.2" height="1.2" fill="#148A38"/><rect x="16.4" y="5.9" width="1.2" height="1.2" fill="#148A38"/><rect x="1.4" y="10.9" width="1.2" height="1.2" fill="#148A38"/><rect x="6.4" y="10.9" width="1.2" height="1.2" fill="#148A38"/><rect x="11.4" y="10.9" width="1.2" height="1.2" fill="#148A38"/><rect x="16.4" y="10.9" width="1.2" height="1.2" fill="#148A38"/><rect x="1.4" y="15.9" width="1.2" height="1.2" fill="#148A38"/><rect x="6.4" y="15.9" width="1.2" height="1.2" fill="#148A38"/><rect x="11.4" y="15.9" width="1.2" height="1.2" fill="#148A38"/><rect x="16.4" y="15.9" width="1.2" height="1.2" fill="#148A38"/><path d="M8.6 3.9h4.6v7.6h-4.6z" fill="none" stroke="#000" stroke-width="1.6"/><path d="M12.6 4v7.4" stroke="#000" stroke-width="1.2"/><path d="M6 11.8h10" stroke="#000" stroke-width="1.4"/><path d="M10.9 12v5" stroke="#000" stroke-width="1"/></svg><svg class="a" style="left:1253px;top:808px;" width="20" height="18" viewBox="0 0 20 18"><rect x="0" y="0" width="20" height="18" fill="#EDF3EE" fill-opacity="0.75"/><path d="M0.5 1.5H20" stroke="#1E9040" stroke-width="1" stroke-dasharray="1 1.5" stroke-opacity="0.75"/><path d="M0.5 6.5H20" stroke="#1E9040" stroke-width="1" stroke-dasharray="1 1.5" stroke-opacity="0.75"/><path d="M0.5 11.5H20" stroke="#1E9040" stroke-width="1" stroke-dasharray="1 1.5" stroke-opacity="0.75"/><path d="M0.5 16.5H20" stroke="#1E9040" stroke-width="1" stroke-dasharray="1 1.5" stroke-opacity="0.75"/><path d="M2 1V17" stroke="#1E9040" stroke-width="1" stroke-dasharray="1 1.5" stroke-opacity="0.7"/><path d="M7 1V17" stroke="#1E9040" stroke-width="1" stroke-dasharray="1 1.5" stroke-opacity="0.7"/><path d="M12 1V17" stroke="#1E9040" stroke-width="1" stroke-dasharray="1 1.5" stroke-opacity="0.7"/><path d="M17 1V17" stroke="#1E9040" stroke-width="1" stroke-dasharray="1 1.5" stroke-opacity="0.7"/><rect x="1.4" y="0.9" width="1.2" height="1.2" fill="#148A38"/><rect x="6.4" y="0.9" width="1.2" height="1.2" fill="#148A38"/><rect x="11.4" y="0.9" width="1.2" height="1.2" fill="#148A38"/><rect x="16.4" y="0.9" width="1.2" height="1.2" fill="#148A38"/><rect x="1.4" y="5.9" width="1.2" height="1.2" fill="#148A38"/><rect x="6.4" y="5.9" width="1.2" height="1.2" fill="#148A38"/><rect x="11.4" y="5.9" width="1.2" height="1.2" fill="#148A38"/><rect x="16.4" y="5.9" width="1.2" height="1.2" fill="#148A38"/><rect x="1.4" y="10.9" width="1.2" height="1.2" fill="#148A38"/><rect x="6.4" y="10.9" width="1.2" height="1.2" fill="#148A38"/><rect x="11.4" y="10.9" width="1.2" height="1.2" fill="#148A38"/><rect x="16.4" y="10.9" width="1.2" height="1.2" fill="#148A38"/><rect x="1.4" y="15.9" width="1.2" height="1.2" fill="#148A38"/><rect x="6.4" y="15.9" width="1.2" height="1.2" fill="#148A38"/><rect x="11.4" y="15.9" width="1.2" height="1.2" fill="#148A38"/><rect x="16.4" y="15.9" width="1.2" height="1.2" fill="#148A38"/><path d="M6.5 5L16 14.5M16 5L6.5 14.5" stroke="#000" stroke-width="1.8"/></svg><div class="a" style="left:480px;top:827px;width:797px;height:193px;background:#FFFFFF;border:2px solid #A8A8A8;border-bottom:none"></div><div class="a" style="left:482px;top:829px;width:773px;height:23px;background:#FBFBFB;border-bottom:1px solid #E2E2E2"></div><div class="a" style="left:675px;top:829px;width:1px;height:191px;background:#E2E2E2"></div><div class="a" style="left:868px;top:829px;width:1px;height:191px;background:#E2E2E2"></div><div class="a" style="left:1062px;top:829px;width:1px;height:191px;background:#E2E2E2"></div><div class="a" style="left:1254px;top:829px;width:1px;height:191px;background:#E2E2E2"></div><div class="t" style="left:486.80px;top:834.73px;font-size:14.5px;line-height:14.5px;color:#000;transform:scaleX(0.8608);transform-origin:0 0;">Name</div><svg class="a" style="left:660px;top:838px;" width="12" height="7" viewBox="0 0 12 7"><path d="M0 7L6 0L12 7z" fill="#A8A8A8"/></svg><div class="t" style="left:681.70px;top:834.73px;font-size:14.5px;line-height:14.5px;color:#000;transform:scaleX(0.8971);transform-origin:0 0;">Value</div><div class="t" style="left:873.90px;top:834.73px;font-size:14.5px;line-height:14.5px;color:#000;transform:scaleX(0.9542);transform-origin:0 0;">Unit</div><div class="t" style="left:1067.20px;top:834.73px;font-size:14.5px;line-height:14.5px;color:#000;transform:scaleX(0.9682);transform-origin:0 0;">Status</div><div class="a" style="left:482px;top:876px;width:773px;height:1px;background:#E2E2E2"></div><div class="t" style="left:485.60px;top:859.13px;font-size:14.5px;line-height:14.5px;color:#000;transform:scaleX(0.9207);transform-origin:0 0;">PLSDCluster.High_Voltage.B...</div><div class="t" style="left:1067.00px;top:859.13px;font-size:14.5px;line-height:14.5px;color:#000;transform:scaleX(0.9201);transform-origin:0 0;">Value from device</div><div class="a" style="left:1231px;top:854.0px;width:21px;height:20px;background:#F0F0F0"></div><svg class="a" style="left:1239px;top:863.0px;" width="8" height="5" viewBox="0 0 8 5"><path d="M0 0h8L4 4z" fill="#000"/></svg><div class="a" style="left:482px;top:900px;width:773px;height:1px;background:#E2E2E2"></div><div class="t" style="left:485.60px;top:883.03px;font-size:14.5px;line-height:14.5px;color:#000;transform:scaleX(0.9207);transform-origin:0 0;">PLSDCluster.High_Voltage.B...</div><div class="t" style="left:1067.00px;top:883.03px;font-size:14.5px;line-height:14.5px;color:#000;transform:scaleX(0.9201);transform-origin:0 0;">Value from device</div><div class="a" style="left:1231px;top:877.9px;width:21px;height:20px;background:#F0F0F0"></div><svg class="a" style="left:1239px;top:886.9px;" width="8" height="5" viewBox="0 0 8 5"><path d="M0 0h8L4 4z" fill="#000"/></svg><div class="a" style="left:482px;top:924px;width:773px;height:1px;background:#E2E2E2"></div><div class="t" style="left:485.60px;top:906.93px;font-size:14.5px;line-height:14.5px;color:#000;transform:scaleX(0.9207);transform-origin:0 0;">PLSDCluster.High_Voltage.B...</div><div class="t" style="left:1067.00px;top:906.93px;font-size:14.5px;line-height:14.5px;color:#000;transform:scaleX(0.9201);transform-origin:0 0;">Value from device</div><div class="a" style="left:1231px;top:901.8px;width:21px;height:20px;background:#F0F0F0"></div><svg class="a" style="left:1239px;top:910.8px;" width="8" height="5" viewBox="0 0 8 5"><path d="M0 0h8L4 4z" fill="#000"/></svg><div class="a" style="left:482px;top:948px;width:773px;height:1px;background:#E2E2E2"></div><div class="t" style="left:485.60px;top:930.83px;font-size:14.5px;line-height:14.5px;color:#000;transform:scaleX(0.9207);transform-origin:0 0;">PLSDCluster.High_Voltage.B...</div><div class="t" style="left:1067.00px;top:930.83px;font-size:14.5px;line-height:14.5px;color:#000;transform:scaleX(0.9201);transform-origin:0 0;">Value from device</div><div class="a" style="left:1231px;top:925.7px;width:21px;height:20px;background:#F0F0F0"></div><svg class="a" style="left:1239px;top:934.7px;" width="8" height="5" viewBox="0 0 8 5"><path d="M0 0h8L4 4z" fill="#000"/></svg><div class="a" style="left:482px;top:972px;width:773px;height:1px;background:#E2E2E2"></div><div class="t" style="left:485.60px;top:954.73px;font-size:14.5px;line-height:14.5px;color:#000;transform:scaleX(0.9207);transform-origin:0 0;">PLSDCluster.High_Voltage.B...</div><div class="t" style="left:1067.00px;top:954.73px;font-size:14.5px;line-height:14.5px;color:#000;transform:scaleX(0.9201);transform-origin:0 0;">Value from device</div><div class="a" style="left:1231px;top:949.6px;width:21px;height:20px;background:#F0F0F0"></div><svg class="a" style="left:1239px;top:958.6px;" width="8" height="5" viewBox="0 0 8 5"><path d="M0 0h8L4 4z" fill="#000"/></svg><div class="a" style="left:482px;top:996px;width:773px;height:1px;background:#E2E2E2"></div><div class="t" style="left:485.60px;top:978.63px;font-size:14.5px;line-height:14.5px;color:#000;transform:scaleX(0.9207);transform-origin:0 0;">PLSDCluster.High_Voltage.B...</div><div class="t" style="left:1067.00px;top:978.63px;font-size:14.5px;line-height:14.5px;color:#000;transform:scaleX(0.9201);transform-origin:0 0;">Value from device</div><div class="a" style="left:1231px;top:973.5px;width:21px;height:20px;background:#F0F0F0"></div><svg class="a" style="left:1239px;top:982.5px;" width="8" height="5" viewBox="0 0 8 5"><path d="M0 0h8L4 4z" fill="#000"/></svg><div class="a" style="left:482px;top:1019px;width:773px;height:1px;background:#E2E2E2"></div><div class="t" style="left:485.60px;top:1002.53px;font-size:14.5px;line-height:14.5px;color:#000;transform:scaleX(0.9207);transform-origin:0 0;">PLSDCluster.High_Voltage.B...</div><div class="t" style="left:1067.00px;top:1002.53px;font-size:14.5px;line-height:14.5px;color:#000;transform:scaleX(0.9201);transform-origin:0 0;">Value from device</div><div class="a" style="left:1231px;top:997.4px;width:21px;height:20px;background:#F0F0F0"></div><svg class="a" style="left:1239px;top:1006.4px;" width="8" height="5" viewBox="0 0 8 5"><path d="M0 0h8L4 4z" fill="#000"/></svg><div class="a" style="left:1255px;top:829px;width:21px;height:191px;background:#FFFFFF"></div><svg class="a" style="left:1260px;top:836px;" width="11" height="7" viewBox="0 0 11 7"><path d="M1 6L5.5 1.5L10 6" fill="none" stroke="#606060" stroke-width="1.5"/></svg><div class="a" style="left:1256px;top:851px;width:20px;height:23px;background:#DADADA;border:1px solid #C8C8C8"></div><div class="a" style="left:1261px;top:858px;width:9px;height:1.5px;background:#707070"></div><div class="a" style="left:1261px;top:861px;width:9px;height:1.5px;background:#707070"></div><div class="a" style="left:1261px;top:864px;width:9px;height:1.5px;background:#707070"></div><svg class="a" style="left:1260px;top:1004px;" width="11" height="7" viewBox="0 0 11 7"><path d="M1 1L5.5 5.5L10 1" fill="none" stroke="#606060" stroke-width="1.5"/></svg><div class="a" style="left:1255px;top:848px;width:21px;height:1px;background:#E6E6E6"></div><div class="a" style="left:480px;top:1018px;width:797px;height:2px;background:#ABABAB"></div><div class="a" style="left:1275px;top:827px;width:2px;height:193px;background:#B0B0B0"></div><div class="a" style="left:1283px;top:139px;width:637px;height:22px;background:#BAD7BF"></div><div class="t" style="left:1290.50px;top:143.09px;font-size:16.2px;line-height:16.2px;color:#000;transform:scaleX(0.8843);transform-origin:0 0;">Properties</div><svg class="a" style="left:1875px;top:142px;" width="20" height="18" viewBox="0 0 20 18"><rect x="0" y="0" width="20" height="18" fill="#EDF3EE" fill-opacity="0.75"/><path d="M0.5 1.5H20" stroke="#1E9040" stroke-width="1" stroke-dasharray="1 1.5" stroke-opacity="0.75"/><path d="M0.5 6.5H20" stroke="#1E9040" stroke-width="1" stroke-dasharray="1 1.5" stroke-opacity="0.75"/><path d="M0.5 11.5H20" stroke="#1E9040" stroke-width="1" stroke-dasharray="1 1.5" stroke-opacity="0.75"/><path d="M0.5 16.5H20" stroke="#1E9040" stroke-width="1" stroke-dasharray="1 1.5" stroke-opacity="0.75"/><path d="M2 1V17" stroke="#1E9040" stroke-width="1" stroke-dasharray="1 1.5" stroke-opacity="0.7"/><path d="M7 1V17" stroke="#1E9040" stroke-width="1" stroke-dasharray="1 1.5" stroke-opacity="0.7"/><path d="M12 1V17" stroke="#1E9040" stroke-width="1" stroke-dasharray="1 1.5" stroke-opacity="0.7"/><path d="M17 1V17" stroke="#1E9040" stroke-width="1" stroke-dasharray="1 1.5" stroke-opacity="0.7"/><rect x="1.4" y="0.9" width="1.2" height="1.2" fill="#148A38"/><rect x="6.4" y="0.9" width="1.2" height="1.2" fill="#148A38"/><rect x="11.4" y="0.9" width="1.2" height="1.2" fill="#148A38"/><rect x="16.4" y="0.9" width="1.2" height="1.2" fill="#148A38"/><rect x="1.4" y="5.9" width="1.2" height="1.2" fill="#148A38"/><rect x="6.4" y="5.9" width="1.2" height="1.2" fill="#148A38"/><rect x="11.4" y="5.9" width="1.2" height="1.2" fill="#148A38"/><rect x="16.4" y="5.9" width="1.2" height="1.2" fill="#148A38"/><rect x="1.4" y="10.9" width="1.2" height="1.2" fill="#148A38"/><rect x="6.4" y="10.9" width="1.2" height="1.2" fill="#148A38"/><rect x="11.4" y="10.9" width="1.2" height="1.2" fill="#148A38"/><rect x="16.4" y="10.9" width="1.2" height="1.2" fill="#148A38"/><rect x="1.4" y="15.9" width="1.2" height="1.2" fill="#148A38"/><rect x="6.4" y="15.9" width="1.2" height="1.2" fill="#148A38"/><rect x="11.4" y="15.9" width="1.2" height="1.2" fill="#148A38"/><rect x="16.4" y="15.9" width="1.2" height="1.2" fill="#148A38"/><path d="M8.6 3.9h4.6v7.6h-4.6z" fill="none" stroke="#000" stroke-width="1.6"/><path d="M12.6 4v7.4" stroke="#000" stroke-width="1.2"/><path d="M6 11.8h10" stroke="#000" stroke-width="1.4"/><path d="M10.9 12v5" stroke="#000" stroke-width="1"/></svg><svg class="a" style="left:1896px;top:142px;" width="20" height="18" viewBox="0 0 20 18"><rect x="0" y="0" width="20" height="18" fill="#EDF3EE" fill-opacity="0.75"/><path d="M0.5 1.5H20" stroke="#1E9040" stroke-width="1" stroke-dasharray="1 1.5" stroke-opacity="0.75"/><path d="M0.5 6.5H20" stroke="#1E9040" stroke-width="1" stroke-dasharray="1 1.5" stroke-opacity="0.75"/><path d="M0.5 11.5H20" stroke="#1E9040" stroke-width="1" stroke-dasharray="1 1.5" stroke-opacity="0.75"/><path d="M0.5 16.5H20" stroke="#1E9040" stroke-width="1" stroke-dasharray="1 1.5" stroke-opacity="0.75"/><path d="M2 1V17" stroke="#1E9040" stroke-width="1" stroke-dasharray="1 1.5" stroke-opacity="0.7"/><path d="M7 1V17" stroke="#1E9040" stroke-width="1" stroke-dasharray="1 1.5" stroke-opacity="0.7"/><path d="M12 1V17" stroke="#1E9040" stroke-width="1" stroke-dasharray="1 1.5" stroke-opacity="0.7"/><path d="M17 1V17" stroke="#1E9040" stroke-width="1" stroke-dasharray="1 1.5" stroke-opacity="0.7"/><rect x="1.4" y="0.9" width="1.2" height="1.2" fill="#148A38"/><rect x="6.4" y="0.9" width="1.2" height="1.2" fill="#148A38"/><rect x="11.4" y="0.9" width="1.2" height="1.2" fill="#148A38"/><rect x="16.4" y="0.9" width="1.2" height="1.2" fill="#148A38"/><rect x="1.4" y="5.9" width="1.2" height="1.2" fill="#148A38"/><rect x="6.4" y="5.9" width="1.2" height="1.2" fill="#148A38"/><rect x="11.4" y="5.9" width="1.2" height="1.2" fill="#148A38"/><rect x="16.4" y="5.9" width="1.2" height="1.2" fill="#148A38"/><rect x="1.4" y="10.9" width="1.2" height="1.2" fill="#148A38"/><rect x="6.4" y="10.9" width="1.2" height="1.2" fill="#148A38"/><rect x="11.4" y="10.9" width="1.2" height="1.2" fill="#148A38"/><rect x="16.4" y="10.9" width="1.2" height="1.2" fill="#148A38"/><rect x="1.4" y="15.9" width="1.2" height="1.2" fill="#148A38"/><rect x="6.4" y="15.9" width="1.2" height="1.2" fill="#148A38"/><rect x="11.4" y="15.9" width="1.2" height="1.2" fill="#148A38"/><rect x="16.4" y="15.9" width="1.2" height="1.2" fill="#148A38"/><path d="M6.5 5L16 14.5M16 5L6.5 14.5" stroke="#000" stroke-width="1.8"/></svg><div class="a" style="left:1283px;top:161px;width:637px;height:32px;background:linear-gradient(#FDFDFD,#F0F0F0)"></div><svg class="a" style="left:1289px;top:167px;" width="15" height="18" viewBox="0 0 15 18"><path d="M0.5 0.5h10l4 4v13h-14z" fill="#E8F0FC" stroke="#6C7CB8"/><path d="M3 10 L6 13 L11 5" fill="none" stroke="#E83020" stroke-width="2"/></svg><div class="a" style="left:1311px;top:163px;width:29px;height:27px;background:#F4F8FC;border:1px solid #3399FF"></div><svg class="a" style="left:1317px;top:167px;" width="17" height="18" viewBox="0 0 17 18"><path d="M0.5 0.5h12l4 4v13h-16z" fill="#E8F0FC" stroke="#6C7CB8"/><path d="M3 3h4M3 5.5h4M3 8h4" stroke="#202020" stroke-width="1.2"/><path d="M3 10 L7 14 L13 5" fill="none" stroke="#E83020" stroke-width="2"/></svg><div class="a" style="left:1283px;top:193px;width:637px;height:723px;background:#FFFFFF;border:2px solid #A8A8A8;border-right:1px solid #A8A8A8;border-bottom:2px solid #A8A8A8"></div><div class="a" style="left:1285px;top:195px;width:25px;height:283px;background:#F3F6FA"></div><div class="a" style="left:1285px;top:195px;width:634px;height:19px;background:#F3F6FA"></div><svg class="a" style="left:1293px;top:199.89999999999998px;" width="8" height="8" viewBox="0 0 8 8"><path d="M7.3 0.7V7.3H0.7Z" fill="#9A9A9A" stroke="#303030" stroke-width="1" stroke-linejoin="round"/></svg><div class="t" style="left:1314.40px;top:197.38px;font-size:14.2px;line-height:14.2px;color:#000;transform:scaleX(0.9300);transform-origin:0 0;font-weight:bold">General</div><div class="a" style="left:1310px;top:214px;width:609px;height:19px;background:#FFFFFF;border-bottom:1px solid #EEF1F6"></div><div class="a" style="left:1587px;top:214px;width:1px;height:19px;background:#EEF1F6"></div><div class="t" style="left:1314.40px;top:217.71px;font-size:14px;line-height:14px;color:#000;transform:scaleX(0.9240);transform-origin:0 0;">Name</div><div class="a" style="left:1285px;top:233px;width:634px;height:19px;background:#F3F6FA"></div><svg class="a" style="left:1293px;top:237.61999999999998px;" width="8" height="8" viewBox="0 0 8 8"><path d="M7.3 0.7V7.3H0.7Z" fill="#9A9A9A" stroke="#303030" stroke-width="1" stroke-linejoin="round"/></svg><div class="t" style="left:1314.40px;top:235.10px;font-size:14.2px;line-height:14.2px;color:#000;transform:scaleX(0.9300);transform-origin:0 0;font-weight:bold">Behavior</div><div class="a" style="left:1310px;top:252px;width:609px;height:19px;background:#FFFFFF;border-bottom:1px solid #EEF1F6"></div><div class="a" style="left:1587px;top:252px;width:1px;height:19px;background:#EEF1F6"></div><div class="a" style="left:1310px;top:252px;width:277px;height:17px;background:#3399FF"></div><div class="t" style="left:1314.40px;top:255.43px;font-size:14px;line-height:14px;color:#FFFFFF;transform:scaleX(0.9240);transform-origin:0 0;">OnMouseClick</div><div class="a" style="left:1310px;top:270px;width:609px;height:19px;background:#FFFFFF;border-bottom:1px solid #EEF1F6"></div><div class="a" style="left:1587px;top:270px;width:1px;height:19px;background:#EEF1F6"></div><div class="t" style="left:1314.40px;top:274.29px;font-size:14px;line-height:14px;color:#000;transform:scaleX(0.9240);transform-origin:0 0;">OnMouseDown</div><div class="a" style="left:1310px;top:289px;width:609px;height:19px;background:#FFFFFF;border-bottom:1px solid #EEF1F6"></div><div class="a" style="left:1587px;top:289px;width:1px;height:19px;background:#EEF1F6"></div><div class="t" style="left:1314.40px;top:293.15px;font-size:14px;line-height:14px;color:#000;transform:scaleX(0.9240);transform-origin:0 0;">OnMouseUp</div><div class="a" style="left:1310px;top:308px;width:609px;height:19px;background:#FFFFFF;border-bottom:1px solid #EEF1F6"></div><div class="a" style="left:1587px;top:308px;width:1px;height:19px;background:#EEF1F6"></div><div class="t" style="left:1314.40px;top:312.01px;font-size:14px;line-height:14px;color:#000;transform:scaleX(0.9240);transform-origin:0 0;">OnMouseOut</div><div class="a" style="left:1310px;top:327px;width:609px;height:19px;background:#FFFFFF;border-bottom:1px solid #EEF1F6"></div><div class="a" style="left:1587px;top:327px;width:1px;height:19px;background:#EEF1F6"></div><div class="t" style="left:1314.40px;top:330.87px;font-size:14px;line-height:14px;color:#000;transform:scaleX(0.9240);transform-origin:0 0;">OnMouseOver</div><div class="a" style="left:1310px;top:346px;width:609px;height:19px;background:#FFFFFF;border-bottom:1px solid #EEF1F6"></div><div class="a" style="left:1587px;top:346px;width:1px;height:19px;background:#EEF1F6"></div><div class="t" style="left:1314.40px;top:349.73px;font-size:14px;line-height:14px;color:#000;transform:scaleX(0.9240);transform-origin:0 0;">OnMouseMove</div><div class="a" style="left:1310px;top:365px;width:609px;height:19px;background:#FFFFFF;border-bottom:1px solid #EEF1F6"></div><div class="a" style="left:1587px;top:365px;width:1px;height:19px;background:#EEF1F6"></div><div class="t" style="left:1314.40px;top:368.59px;font-size:14px;line-height:14px;color:#000;transform:scaleX(0.9240);transform-origin:0 0;">OnSignalChange</div><div class="a" style="left:1310px;top:384px;width:609px;height:19px;background:#FFFFFF;border-bottom:1px solid #EEF1F6"></div><div class="a" style="left:1587px;top:384px;width:1px;height:19px;background:#EEF1F6"></div><div class="t" style="left:1314.40px;top:387.45px;font-size:14px;line-height:14px;color:#000;transform:scaleX(0.9240);transform-origin:0 0;">OnDocumentLoad</div><div class="a" style="left:1285px;top:402px;width:634px;height:19px;background:#F3F6FA"></div><svg class="a" style="left:1293px;top:407.35999999999996px;" width="8" height="8" viewBox="0 0 8 8"><path d="M7.3 0.7V7.3H0.7Z" fill="#9A9A9A" stroke="#303030" stroke-width="1" stroke-linejoin="round"/></svg><div class="t" style="left:1314.40px;top:404.84px;font-size:14.2px;line-height:14.2px;color:#000;transform:scaleX(0.9300);transform-origin:0 0;font-weight:bold">Content</div><div class="a" style="left:1310px;top:421px;width:609px;height:19px;background:#FFFFFF;border-bottom:1px solid #EEF1F6"></div><div class="a" style="left:1587px;top:421px;width:1px;height:19px;background:#EEF1F6"></div><div class="t" style="left:1314.40px;top:425.17px;font-size:14px;line-height:14px;color:#000;transform:scaleX(0.9240);transform-origin:0 0;">Content</div><div class="a" style="left:1285px;top:440px;width:634px;height:19px;background:#F3F6FA"></div><svg class="a" style="left:1293px;top:445.08px;" width="8" height="8" viewBox="0 0 8 8"><path d="M7.3 0.7V7.3H0.7Z" fill="#9A9A9A" stroke="#303030" stroke-width="1" stroke-linejoin="round"/></svg><div class="t" style="left:1314.40px;top:442.56px;font-size:14.2px;line-height:14.2px;color:#000;transform:scaleX(0.9300);transform-origin:0 0;font-weight:bold">Custom</div><div class="a" style="left:1310px;top:459px;width:609px;height:19px;background:#FFFFFF;border-bottom:1px solid #EEF1F6"></div><div class="a" style="left:1587px;top:459px;width:1px;height:19px;background:#EEF1F6"></div><div class="t" style="left:1314.40px;top:462.89px;font-size:14px;line-height:14px;color:#000;transform:scaleX(0.9240);transform-origin:0 0;">InstanceId</div><div class="a" style="left:1588px;top:195px;width:330px;height:300px;overflow:hidden"><div class="t" style="left:4.5px;top:60.43px;font-size:14px;line-height:14px;color:#000;transform:scaleX(0.945);transform-origin:0 0">click</div><div class="t" style="left:4.5px;top:192.45px;font-size:14px;line-height:14px;color:#000;transform:scaleX(0.945);transform-origin:0 0">load</div><div class="t" style="left:4.5px;top:230.17px;font-size:14px;line-height:14px;color:#000;transform:scaleX(0.945);transform-origin:0 0">function click(evt){&nbsp;&nbsp;&nbsp;&nbsp;var componentName = evt.getCurre</div><div class="t" style="left:4.5px;top:267.89px;font-size:14px;line-height:14px;color:#000;transform:scaleX(0.945);transform-origin:0 0">c3734c94-6313-4a66-bb0f-410a2354d878</div></div><div class="a" style="left:1617px;top:253px;width:1px;height:16px;background:#000"></div><div class="a" style="left:1899px;top:253px;width:19px;height:15px;background:linear-gradient(#E8F2FC,#D4E6F8);border:1px solid #3C7FB1"></div><svg class="a" style="left:1903px;top:262px;" width="11" height="3" viewBox="0 0 11 3"><rect x="0" y="0" width="2" height="2" fill="#000"/><rect x="4.5" y="0" width="2" height="2" fill="#000"/><rect x="9" y="0" width="2" height="2" fill="#000"/></svg><div class="a" style="left:1283px;top:920px;width:637px;height:74px;background:#EEEEEE;border:1px solid #A8A8A8;border-left:2px solid #A8A8A8;border-bottom:2px solid #8A8A8A"></div><div class="t" style="left:1289.00px;top:924.68px;font-size:14.2px;line-height:14.2px;color:#000;transform:scaleX(0.9305);transform-origin:0 0;font-weight:bold">OnMouseClick</div><div class="t" style="left:1289.00px;top:942.35px;font-size:14px;line-height:14px;color:#000;transform:scaleX(0.9307);transform-origin:0 0;">A mouse button is clicked over an element.</div><div class="a" style="left:1283px;top:994px;width:637px;height:26px;background:#E2E2E2"></div><div class="a" style="left:1368px;top:993px;width:101px;height:27px;background:#F4F4F4;border:1px solid #A0A0A0;border-top:none;border-radius:0 0 3px 3px"></div><svg class="a" style="left:1290px;top:997px;" width="11" height="16" viewBox="0 0 11 16"><rect x="0" y="0" width="10" height="7" fill="#3C78C8"/><rect x="0" y="9" width="10" height="7" fill="#3C78C8"/></svg><div class="t" style="left:1309.00px;top:998.76px;font-size:16px;line-height:16px;color:#6E6E6E;transform:scaleX(0.9089);transform-origin:0 0;">Objects</div><svg class="a" style="left:1372px;top:996px;" width="15" height="18" viewBox="0 0 15 18"><path d="M0.5 0.5h10l4 4v13h-14z" fill="#E8F0FC" stroke="#6C7CB8"/><path d="M3 10 L6 13 L11 5" fill="none" stroke="#E83020" stroke-width="2"/></svg><div class="t" style="left:1394.00px;top:998.76px;font-size:16px;line-height:16px;color:#000;transform:scaleX(0.9050);transform-origin:0 0;">Properties</div><svg class="a" style="left:1473px;top:996px;" width="15" height="18" viewBox="0 0 15 18"><path d="M0.5 0.5h10l4 4v13h-14z" fill="#E8F0FC" stroke="#6C7CB8"/><path d="M3 10 L6 13 L11 5" fill="none" stroke="#E83020" stroke-width="2"/></svg><div class="t" style="left:1495.00px;top:998.76px;font-size:16px;line-height:16px;color:#6E6E6E;transform:scaleX(0.9517);transform-origin:0 0;">Binding</div><div class="a" style="left:1555px;top:998px;width:1px;height:18px;background:#808080"></div><div class="a" style="left:0px;top:1020px;width:1920px;height:30px;background:#FFFFFF;border-top:1px solid #D8D8D8;border-bottom:1px solid #A0A0A0"></div><div class="t" style="left:5.20px;top:1027.80px;font-size:15px;line-height:15px;color:#000;transform:scaleX(0.8901);transform-origin:0 0;">X: 608</div><div class="t" style="left:51.60px;top:1027.80px;font-size:15px;line-height:15px;color:#000;transform:scaleX(0.8886);transform-origin:0 0;">Y: 324</div><svg class="a" style="left:152px;top:1026px;" width="22" height="19" viewBox="0 0 22 19"><rect x="6.5" y="4.5" width="14" height="13" fill="none" stroke="#404040" stroke-dasharray="2 2"/><path d="M2 6v11M0 15l2 3 2-3" stroke="#404040" fill="none"/><path d="M8 2h12M18 0l2 2-2 2" stroke="#404040" fill="none"/></svg><div class="t" style="left:180.20px;top:1027.80px;font-size:15px;line-height:15px;color:#000;transform:scaleX(0.9133);transform-origin:0 0;">Left: 71</div><div class="t" style="left:236.00px;top:1027.80px;font-size:15px;line-height:15px;color:#000;transform:scaleX(0.9541);transform-origin:0 0;">Top: 238</div><div class="t" style="left:300.00px;top:1027.80px;font-size:15px;line-height:15px;color:#000;transform:scaleX(0.9628);transform-origin:0 0;">Width: 80</div><div class="t" style="left:370.00px;top:1027.80px;font-size:15px;line-height:15px;color:#000;transform:scaleX(0.9651);transform-origin:0 0;">Height: 80</div><div class="t" style="left:444.20px;top:1027.80px;font-size:15px;line-height:15px;color:#000;transform:scaleX(0.9348);transform-origin:0 0;">Center: 111x278</div><div class="a" style="left:0px;top:1050px;width:1920px;height:30px;background:#69C9EA"></div><div class="a" style="left:0px;top:1050px;width:1920px;height:1px;background:#3A5560"></div><div class="a" style="left:0px;top:1079px;width:1920px;height:1px;background:#3A5560"></div><div class="a" style="left:41px;top:1051px;width:44px;height:28px;background:#74CEEE;border-left:1px solid #2E4E5C;border-right:1px solid #2E4E5C"></div><div class="a" style="left:87px;top:1051px;width:44px;height:28px;background:#74CEEE;border-left:1px solid #2E4E5C;border-right:1px solid #2E4E5C"></div><div class="a" style="left:133px;top:1051px;width:44px;height:28px;background:#74CEEE;border-left:1px solid #2E4E5C;border-right:1px solid #2E4E5C"></div><div class="a" style="left:271px;top:1051px;width:45px;height:28px;background:#70CCEC;border-left:1px solid #2E4E5C;border-right:1px solid #2E4E5C"></div><div class="a" style="left:317px;top:1051px;width:36px;height:28px;background:#74CEEE;border-left:1px solid #2E4E5C;border-right:1px solid #2E4E5C"></div><div class="a" style="left:356px;top:1051px;width:5px;height:28px;background:#74CEEE;border-left:1px solid #2E4E5C;border-right:1px solid #2E4E5C"></div><div class="a" style="left:363px;top:1051px;width:44px;height:28px;background:#74CEEE;border-left:1px solid #2E4E5C;border-right:1px solid #2E4E5C"></div><div class="a" style="left:409px;top:1051px;width:44px;height:28px;background:#74CEEE;border-left:1px solid #2E4E5C;border-right:1px solid #2E4E5C"></div><div class="a" style="left:455px;top:1051px;width:44px;height:28px;background:#74CEEE;border-left:1px solid #2E4E5C;border-right:1px solid #2E4E5C"></div><div class="a" style="left:501px;top:1051px;width:44px;height:28px;background:#74CEEE;border-left:1px solid #2E4E5C;border-right:1px solid #2E4E5C"></div><div class="a" style="left:547px;top:1051px;width:39px;height:28px;background:#A2DDF3;border-left:1px solid #2E4E5C;border-right:1px solid #2E4E5C"></div><div class="a" style="left:587px;top:1051px;width:3px;height:28px;background:#74CEEE;border-left:1px solid #2E4E5C;border-right:1px solid #2E4E5C"></div><div class="a" style="left:591px;top:1051px;width:46px;height:28px;background:#74CEEE;border-left:1px solid #2E4E5C;border-right:1px solid #2E4E5C"></div><div class="a" style="left:639px;top:1051px;width:44px;height:28px;background:#E2BE5A;border-left:1px solid #2E4E5C;border-right:1px solid #2E4E5C"></div><div class="a" style="left:176px;top:1051px;width:1px;height:28px;background:#2E4E5C"></div><svg class="a" style="left:12px;top:1056px;" width="16" height="16" viewBox="0 0 16 16"><path d="M0 2.3L6.5 1.4V7.5H0zM7.5 1.3L16 0V7.5H7.5zM0 8.5H6.5V14.6L0 13.7zM7.5 8.5H16V16L7.5 14.7z" fill="#EAF6FC"/></svg><svg class="a" style="left:54px;top:1056px;" width="18" height="18" viewBox="0 0 18 18"><rect x="1" y="0" width="6" height="12" fill="#2F7FD0" stroke="#fff"/><rect x="3" y="8" width="14" height="9" fill="#2F7FD0" stroke="#fff" stroke-width="1.3"/><path d="M7 8V6h6v2" fill="none" stroke="#fff"/></svg><svg class="a" style="left:100px;top:1058px;" width="16" height="14" viewBox="0 0 16 14"><path d="M3 0h13l-3 14H0z" fill="#2A6FC0" stroke="#B8D8F8" stroke-width="0.8"/><path d="M4 4l4 3-4 3M8 11h4" stroke="#fff" stroke-width="1.4" fill="none"/></svg><svg class="a" style="left:147px;top:1058px;" width="16" height="15" viewBox="0 0 16 15"><path d="M0 2h6l2 2h8v11H0z" fill="#F2D060"/><rect x="1" y="6" width="14" height="8" fill="#F8E090"/><rect x="4" y="9" width="8" height="5" fill="#3070C0"/></svg><svg class="a" style="left:193px;top:1056px;" width="16" height="18" viewBox="0 0 16 18"><rect x="0" y="1" width="16" height="12" rx="1" fill="#3A78D0" stroke="#A8C8F0" stroke-width="0.8"/><circle cx="5" cy="6" r="3" fill="#fff"/><path d="M9 5h5M9 8h5" stroke="#fff" stroke-width="1.3"/><ellipse cx="8" cy="15.5" rx="4" ry="2.5" fill="#D8D8D8"/></svg><svg class="a" style="left:239px;top:1056px;" width="16" height="16" viewBox="0 0 16 16"><text x="8" y="14" font-size="19" font-family="Liberation Serif" font-style="italic" text-anchor="middle" fill="#3A8CE0">e</text><path d="M2 13 C-2 6,10 -2,15 1" fill="none" stroke="#F0C020" stroke-width="1.3"/></svg><svg class="a" style="left:285px;top:1056px;" width="16" height="18" viewBox="0 0 16 18"><rect x="0" y="0" width="6" height="10" rx="2" fill="#E8C040"/><path d="M7 16L14 8M8 8l7 8" stroke="#303030" stroke-width="1.6"/><rect x="5" y="2" width="11" height="15" fill="none" stroke="#6CD040" stroke-dasharray="1 2"/></svg><svg class="a" style="left:327px;top:1055px;" width="16" height="16" viewBox="0 0 16 16"><circle cx="8" cy="8" r="7.5" fill="#E04030"/><path d="M8 8L14.5 4.2A7.5 7.5 0 0 1 8 15.5z" fill="#F8C820"/><path d="M8 8L8 15.5A7.5 7.5 0 0 1 1.5 4.2z" fill="#30A040"/><circle cx="8" cy="8" r="3.6" fill="#fff"/><circle cx="8" cy="8" r="2.8" fill="#3A7BE0"/></svg><svg class="a" style="left:377px;top:1056px;" width="16" height="18" viewBox="0 0 16 18"><rect x="5" y="0" width="10" height="8" fill="#6EA8E0" stroke="#202020"/><rect x="1" y="7" width="9" height="10" fill="#fff" stroke="#202020"/><circle cx="5.5" cy="13" r="2.5" fill="#40B040"/></svg><svg class="a" style="left:423px;top:1056px;" width="16" height="16" viewBox="0 0 16 16"><rect x="0" y="0" width="16" height="16" rx="3" fill="#139A3C"/><path d="M3 4h6c3 0,4 2,4 4s-1 4-4 4H3" fill="none" stroke="#fff" stroke-width="1.5"/></svg><svg class="a" style="left:469px;top:1056px;" width="16" height="18" viewBox="0 0 16 18"><rect x="0" y="0" width="16" height="15" fill="#fff"/><path d="M3 11l5-8 5 6H6" fill="none" stroke="#202020" stroke-width="1.3"/><circle cx="9" cy="11" r="3" fill="none" stroke="#202020"/><rect x="0" y="15" width="16" height="2" fill="#2070D0"/></svg><svg class="a" style="left:514px;top:1056px;" width="16" height="18" viewBox="0 0 16 18"><circle cx="6" cy="8" r="6" fill="#3A80D0"/><path d="M2 6c2-2 5-1 6 2" stroke="#40B040" stroke-width="2" fill="none"/><rect x="9" y="6" width="6" height="11" fill="#C0C0C0" stroke="#707070" stroke-width="0.8"/></svg><svg class="a" style="left:558px;top:1056px;" width="16" height="16" viewBox="0 0 16 16"><rect x="0" y="0" width="16" height="16" rx="2" fill="#3CCB5A"/><path d="M2 0h12a2 2 0 0 1 2 2v7H0V2a2 2 0 0 1 2-2z" fill="#4A8BD4"/><path d="M3 13L8 8 12 3 14 5 10 10Z" fill="none" stroke="#fff" stroke-width="1"/></svg><svg class="a" style="left:606px;top:1057px;" width="14" height="15" viewBox="0 0 14 15"><path d="M0 0h14L0 15z" fill="#8CC070"/><path d="M0 0L14 0 14 0 0 15" fill="#6AA848"/><path d="M2 8h10M9 5l3 3-3 3M5 5l-2 3 2 3" stroke="#202020" stroke-width="1.3" fill="none"/></svg><svg class="a" style="left:652px;top:1056px;" width="16" height="18" viewBox="0 0 16 18"><rect x="0" y="0" width="16" height="13" fill="#fff" stroke="#202020"/><path d="M6 3v7l5-3.5z" fill="#202020"/><path d="M8 13v2M4 15h8" stroke="#202020"/><rect x="0" y="16" width="16" height="2" fill="#2070D0"/></svg><svg class="a" style="left:1603px;top:1057px;" width="16" height="16" viewBox="0 0 16 16"><circle cx="6" cy="4" r="3.5" fill="#C89070"/><path d="M1 12c0-4 2-6 5-6s5 2 5 6z" fill="#3060B0"/><rect x="7" y="9" width="9" height="7" fill="#fff" stroke="#5070A0" stroke-width="0.8"/></svg><svg class="a" style="left:1626px;top:1057px;" width="16" height="17" viewBox="0 0 16 17"><rect x="0" y="0" width="16" height="15" fill="#F8F8F8"/><rect x="2" y="2" width="6" height="11" fill="none" stroke="#202020"/><path d="M11 4v6l4-3z" fill="#202020"/><rect x="0" y="15" width="16" height="2" fill="#2878D0"/></svg><svg class="a" style="left:1650px;top:1057px;" width="15" height="15" viewBox="0 0 15 15"><path d="M0 15V0h15z" fill="#70C050"/></svg><svg class="a" style="left:1676px;top:1057px;" width="14" height="15" viewBox="0 0 14 15"><rect x="0" y="7" width="14" height="7" fill="#404040"/><circle cx="9" cy="6" r="5" fill="#C8C8C8" stroke="#808080"/></svg><svg class="a" style="left:1698px;top:1057px;" width="14" height="14" viewBox="0 0 14 14"><rect x="0" y="0" width="14" height="14" rx="1" fill="#6A6A6A"/><text x="7" y="10" font-size="9" font-weight="bold" text-anchor="middle" fill="#fff" font-family="Liberation Sans">vm</text></svg><svg class="a" style="left:1721px;top:1057px;" width="17" height="16" viewBox="0 0 17 16"><rect x="2" y="0" width="5" height="4" fill="#A0A0A0"/><rect x="0" y="4" width="9" height="9" fill="#606060"/><circle cx="12" cy="12" r="4.5" fill="#30A030"/><path d="M9.5 12l2 2 3-4" stroke="#fff" stroke-width="1.3" fill="none"/></svg><svg class="a" style="left:1745px;top:1057px;" width="17" height="16" viewBox="0 0 17 16"><path d="M0 5h3l5-5v14l-5-5H0z" fill="#E8E8E8" stroke="#505050" stroke-width="0.8"/><circle cx="12" cy="11" r="4.5" fill="#E02020"/><path d="M10 9l4 4M14 9l-4 4" stroke="#fff" stroke-width="1.3"/></svg><svg class="a" style="left:1770px;top:1057px;" width="16" height="16" viewBox="0 0 16 16"><rect x="5" y="3" width="11" height="9" fill="none" stroke="#fff" stroke-width="1.3"/><rect x="0" y="0" width="5" height="7" fill="none" stroke="#fff" stroke-width="1.3"/><path d="M10 12v3M7 15h6" stroke="#fff" stroke-width="1.3"/></svg><svg class="a" style="left:1794px;top:1057px;" width="16" height="16" viewBox="0 0 16 16"><rect x="0" y="0" width="16" height="16" fill="#263A48"/><path d="M2 6c3 5 9 6 12 3" stroke="#fff" stroke-width="1.2" fill="none"/></svg><svg class="a" style="left:1818px;top:1057px;" width="16" height="16" viewBox="0 0 16 16"><path d="M1 0v16" stroke="#F0F0F0" stroke-width="1.5"/><path d="M2 1h9l-2 4 2 4H2z" fill="#F0F0F0" stroke="#606060" stroke-width="0.6"/><circle cx="11.5" cy="11.5" r="4.5" fill="#E02020"/><path d="M9.5 9.5l4 4M13.5 9.5l-4 4" stroke="#fff" stroke-width="1.3"/></svg><div class="t" style="left:1855.60px;top:1058.92px;font-size:12.5px;line-height:12.5px;color:#000;transform:scaleX(0.9158);transform-origin:0 0;">1:18 AM</div>
</body></html>
